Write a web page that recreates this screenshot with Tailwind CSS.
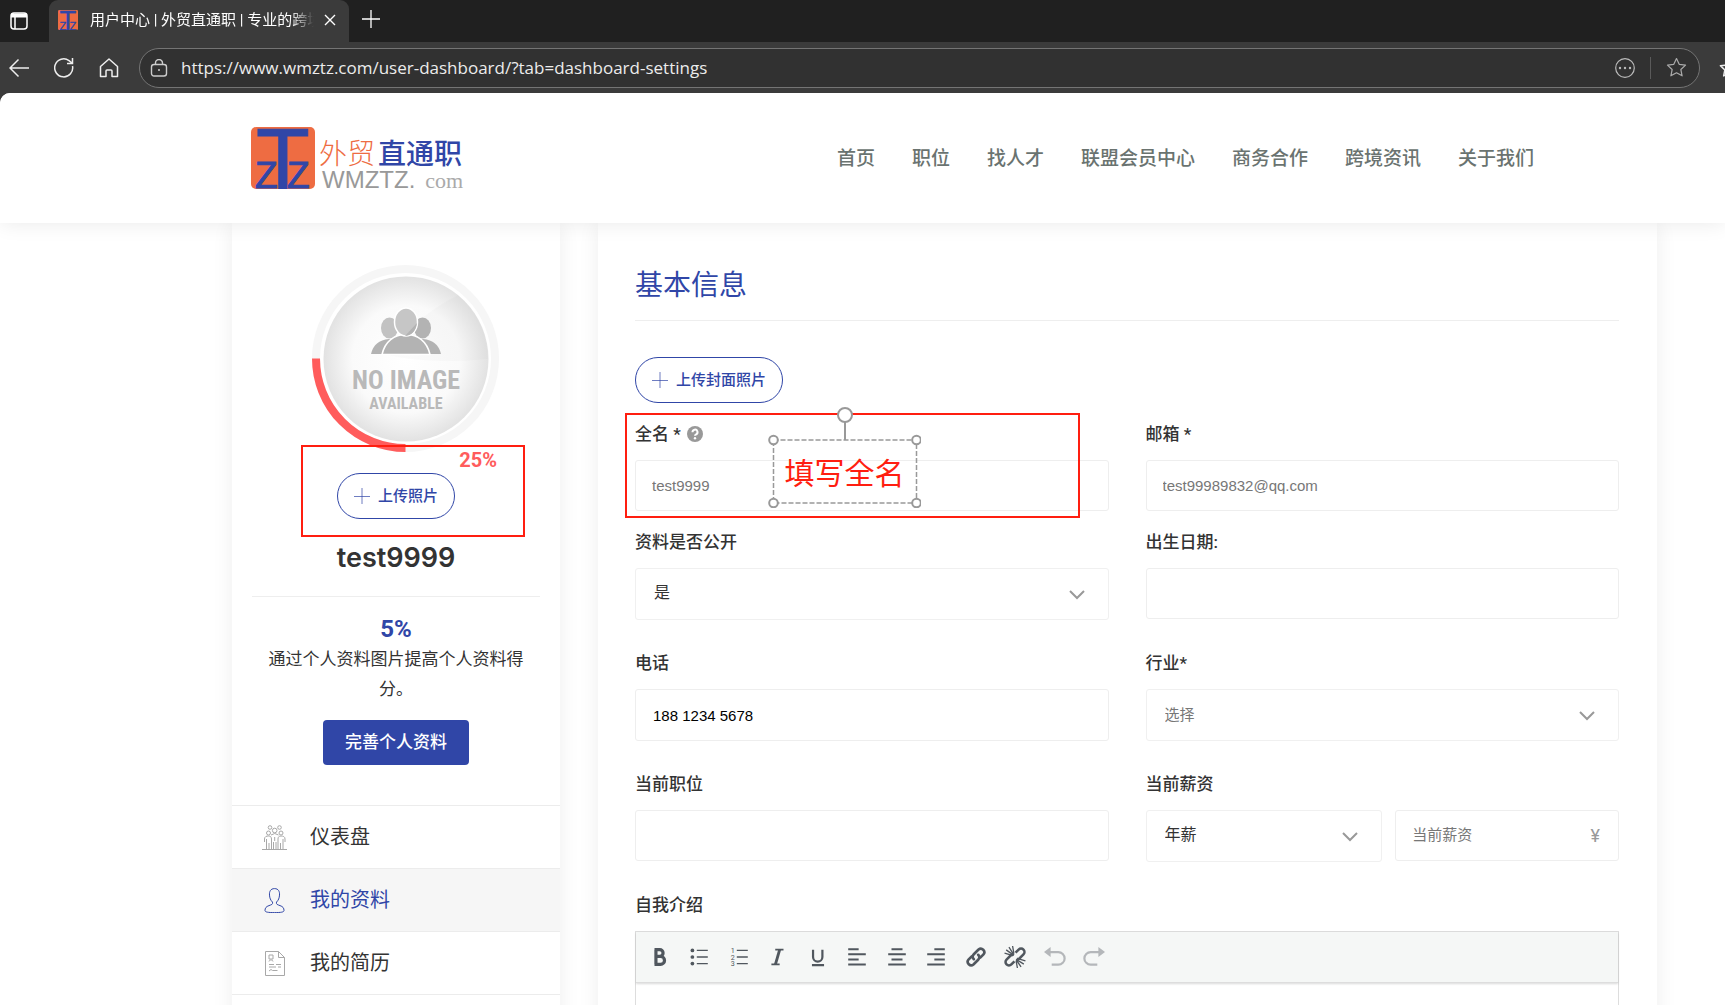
<!DOCTYPE html>
<html lang="zh-CN">
<head>
  <meta charset="UTF-8" />
  <meta name="viewport" content="width=device-width, initial-scale=1.0" />
  <title>用户中心 | 外贸直通职</title>
  <script src="https://cdn.jsdelivr.net/npm/@tailwindcss/browser@4"></script>
</head>
<body class="bg-[#3b3b3b] font-['Roboto','Noto_Sans_CJK_SC',sans-serif] text-[#333]">
  <div class="relative flex h-screen flex-col overflow-hidden">

    <!-- Tab strip -->
    <div class="flex h-[42px] shrink-0 items-end bg-[#202020] text-white">
      <button aria-label="标签页操作" class="flex h-[42px] w-[49px] items-center pl-[10px]">
        <svg class="size-[18px]" viewBox="0 0 18 18" fill="none" stroke="#fff" stroke-width="1.5"><rect x="1" y="1" width="16" height="16" rx="3" /><path d="M1 3.500h16" stroke-width="4" /><path d="M5 5v12" /></svg>
      </button>
      <div class="flex h-[42px] w-[300px] items-center rounded-t-[9px] bg-[#3b3b3b] pr-[13px] pb-[2px] pl-[9px]">
        <svg class="h-[20px] w-[20px] shrink-0" viewBox="0 0 64 62" preserveAspectRatio="none" font-family="Liberation Sans" fill="#3046a7" stroke="#3046a7"><rect width="64" height="62" rx="4" fill="#ee6c42" stroke="none" /><text x="5" y="62" font-size="88">T</text><text x="5" y="61" font-size="36">Z</text><text x="37" y="61" font-size="36">Z</text></svg>
        <span class="ml-[12px] flex-1 overflow-hidden text-[15px] leading-[24px] whitespace-nowrap [mask-image:linear-gradient(to_right,#000_200px,transparent_224px)]">用户中心 | 外贸直通职 | 专业的跨境</span>
        <button aria-label="关闭标签页" class="ml-[10px] shrink-0"><svg class="size-[12px]" viewBox="0 0 12 12" stroke="#fff" stroke-width="1.4"><path d="M1 1l10 10M11 1L1 11" /></svg></button>
      </div>
      <button aria-label="新建标签页" class="flex h-[42px] items-center pb-[4px] pl-[13px]"><svg class="size-[18px]" viewBox="0 0 18 18" stroke="#fff" stroke-width="1.3"><path d="M9 0v18M0 9h18" /></svg></button>
    </div>

    <!-- Address bar -->
    <div class="flex h-[51px] shrink-0 items-center overflow-hidden pl-[9px] text-[#eee]">
      <button aria-label="后退"><svg class="size-[20px]" viewBox="0 0 20 20" fill="none" stroke="#eee" stroke-width="1.5"><path d="M20 10H1M9.500 1.500L1 10l8.500 8.500" /></svg></button>
      <button aria-label="刷新" class="ml-[25px]"><svg class="size-[20px]" viewBox="0 0 20 20" fill="none" stroke="#eee" stroke-width="1.5"><path d="M18.500 8A9 9 0 1 1 15 2.600L18 5M18.500 0v5.500H13" /></svg></button>
      <button aria-label="主页" class="ml-[25px]"><svg class="size-[20px]" viewBox="0 0 20 20" fill="none" stroke="#eee" stroke-width="1.5" stroke-linejoin="round"><path d="M1.500 8.500L10 1l8.500 7.500V18.500h-5.500V13a1 1 0 0 0-1-1H8a1 1 0 0 0-1 1v5.500H1.500z" /></svg></button>
      <div class="ml-[20px] flex h-[40px] flex-1 items-center rounded-full border-[1px] border-[#747474] bg-[#313131] pr-[12px] pl-[10px]">
        <svg class="size-[18px] shrink-0" viewBox="0 0 18 18" fill="none" stroke="#ccc" stroke-width="1.4"><rect x="1.500" y="5.500" width="15" height="11.500" rx="2.500" /><path d="M5.500 5.500V4a3.500 3.500 0 0 1 7 0v1.500" /><circle cx="9" cy="11" r="1" fill="#ccc" stroke="none" /></svg>
        <input aria-label="地址" value="https://www.wmztz.com/user-dashboard/?tab=dashboard-settings" class="ml-[13px] min-w-0 flex-1 bg-transparent text-[17px] text-[#ececec] outline-none font-['Open_Sans','Noto_Sans',sans-serif]" />
        <button aria-label="更多"><svg class="size-[20px]" viewBox="0 0 20 20" fill="none" stroke="#bbb" stroke-width="1.2"><circle cx="10" cy="10" r="9.300" /><g fill="#bbb" stroke="none"><circle cx="5" cy="10" r="1.200" /><circle cx="10" cy="10" r="1.200" /><circle cx="15" cy="10" r="1.200" /></g></svg></button>
        <span class="mx-[15px] h-[22px] w-px bg-[#5a5a5a]"></span>
        <button aria-label="收藏"><svg class="size-[21px]" viewBox="0 0 24 24" fill="none" stroke="#aaa" stroke-width="1.4" stroke-linejoin="round"><path d="M12 1.800l3.100 6.600 7.200.9-5.300 5 1.400 7.200L12 18l-6.400 3.500L7 14.300l-5.300-5 7.200-.9z" /></svg></button>
      </div>
      <button aria-label="收藏夹" class="ml-[19px] w-[6px] overflow-hidden"><svg class="size-[20px] max-w-none" viewBox="0 0 24 24" fill="none" stroke="#eee" stroke-width="1.800" stroke-linejoin="round"><path d="M12 1.800l3.100 6.600 7.200.9-5.300 5 1.400 7.200L12 18l-6.400 3.500L7 14.300l-5.300-5 7.200-.9z" /></svg></button>
    </div>

    <!-- Page -->
    <div class="flex min-h-0 flex-1 flex-col overflow-hidden rounded-tl-[10px] bg-white">
      <header class="relative z-10 flex h-[130px] shrink-0 items-center justify-between bg-white pr-[191px] pl-[251px] shadow-[0_0_20px_rgba(0,0,0,0.09)]">
        <a href="#" class="flex items-start gap-[4px]">
          <svg class="h-[62px] w-[64px]" viewBox="0 0 64 62" font-family="Liberation Sans" fill="#3046a7" stroke="#3046a7"><rect width="64" height="62" rx="5" fill="#ee6c42" stroke="none" /><text x="5" y="62" font-size="88">T</text><text x="4" y="61" font-size="37">Z</text><text x="36" y="61" font-size="37">Z</text></svg>
          <span class="flex flex-col pt-[12px]">
            <span class="flex gap-[3px] text-[28px] leading-[32px] font-medium text-[#3046a7]"><span class="font-light text-[#ee6c42]">外贸</span>直通职</span>
            <span class="flex items-baseline pl-[3px] font-['Liberation_Sans',sans-serif] text-[24px] leading-[18px] text-[#999]">WMZTZ.<span class="ml-[10px] font-['Liberation_Serif',serif] text-[22px] text-[#aaa]">com</span></span>
          </span>
        </a>
        <nav class="flex gap-[37px] pt-[3px] text-[19px] font-medium text-[#6a7370]">
          <a href="#">首页</a>
          <a href="#">职位</a>
          <a href="#">找人才</a>
          <a href="#">联盟会员中心</a>
          <a href="#">商务合作</a>
          <a href="#">跨境资讯</a>
          <a href="#">关于我们</a>
        </nav>
      </header>

      <div class="flex flex-1 gap-[38px] pr-[68px] pl-[232px]">
        <!-- Sidebar -->
        <aside class="flex w-[328px] shrink-0 flex-col bg-white pt-[42px] shadow-[0_0_20px_rgba(0,0,0,0.07)]">
          <div class="flex flex-col items-center px-[20px]">
            <div class="relative ml-[19px]">
              <svg class="size-[187px]" viewBox="0 0 187 187">
                <defs>
                  <radialGradient id="disc"><stop offset="0" stop-color="#fff" /><stop offset="0.650" stop-color="#fafafa" /><stop offset="1" stop-color="#e2e2e2" /></radialGradient>
                </defs>
                <circle cx="93.500" cy="93.500" r="89.500" fill="none" stroke="#f6f6f6" stroke-width="8" />
                <path d="M4 93.500A89.500 89.500 0 0 0 93.500 183" fill="none" stroke="#ff5c5c" stroke-width="8" />
                <circle cx="94" cy="94" r="82.500" fill="url(#disc)" />
                <path d="M146 30Q105 50 75 90Q120 100 176 94Q175 55 146 30z" fill="#000" opacity="0.015" />
                <g fill="#b3b3b3">
                  <ellipse cx="77.500" cy="63" rx="8.500" ry="10.500" fill="#c2c2c2" /><ellipse cx="110.500" cy="63" rx="8.500" ry="10.500" />
                  <path d="M59 89c2-9 8-14 18-15h34c10 1 16 6 18 15z" />
                  <path d="M70 89.500c3-13 12-20 24-20s21 7 24 20z" stroke="#fff" stroke-width="1.500" />
                  <ellipse cx="94" cy="57" rx="11.500" ry="14" fill="#c6c6c6" stroke="#fff" stroke-width="1.500" />
                  <path d="M105 58c-1 8-6 13-12 13z" />
                </g>
                <g font-family="'Liberation Sans Narrow','Roboto Condensed','Roboto'" font-weight="700" fill="#b9b9b9" text-anchor="middle">
                  <text x="94" y="124" font-size="26">NO IMAGE</text>
                  <text x="94" y="144" font-size="16">AVAILABLE</text>
                </g>
              </svg>
              <span class="absolute top-full right-[2px] -mt-[4px] text-[20px] leading-[24px] font-bold text-[#ff5c5c]">25%</span>
            </div>
            <button class="mt-[21px] flex h-[46px] items-center gap-[8px] rounded-full border border-[#3046a7] px-[16px] text-[15px] font-medium text-[#3046a7]">
              <svg class="size-[16px]" viewBox="0 0 16 16" stroke="#3046a7" stroke-opacity="0.700"><path d="M8 0v16M0 8.500h16" /></svg>上传照片
            </button>
            <h2 class="mt-[23px] font-['Inter',sans-serif] text-[27px] leading-[32px] font-semibold">test9999</h2>
            <div class="mt-[22px] flex w-full flex-col items-center border-t border-[#eee] pt-[18px] text-center">
              <strong class="text-[24px] leading-[28px] font-bold text-[#3046a7]">5%</strong>
              <p class="px-[12px] pt-[1px] text-[17px] leading-[30px]">通过个人资料图片提高个人资料得分。</p>
              <button class="mt-[16px] mb-[40px] h-[45px] rounded-[4px] bg-[#3046a7] px-[22px] text-[17px] font-medium text-white">完善个人资料</button>
            </div>
          </div>
          <nav class="flex flex-col text-[20px]">
            <a href="#" class="flex h-[63px] items-center gap-[23px] border-t border-[#ececec] pl-[30px]">
              <svg class="size-[25px]" viewBox="0 0 25 25" fill="none" stroke="#a8a8a8"><circle cx="8" cy="2.500" r="1.800" /><circle cx="17.500" cy="2.500" r="1.800" /><circle cx="12.700" cy="5.500" r="2.300" /><circle cx="6.500" cy="8" r="2" /><circle cx="19" cy="8" r="2" /><path d="M0 24.500h25M2.500 17v-3c0-2.500 2-3 4-3s3 1 3 3v10M23 17v-3c0-2.500-2-3-4-3s-3 1-3 3v10M4.500 14v10M21 14v10M7 18v6M18.500 18v6M9 10q3.700-3 7.500 0M11.500 17v7M14 17v7M12.700 12v4" /></svg>
              仪表盘
            </a>
            <a href="#" class="flex h-[63px] items-center gap-[23px] border-t border-[#ececec] bg-[#f6f6f6] pl-[30px] text-[#3046a7]">
              <svg class="size-[25px]" viewBox="0 0 25 25" fill="none" stroke="#3046a7"><path d="M12.500.600c-4 0-5.300 3-5 6.500.2 3 1 5 3 7 .5 2.500-1 2.500-3.500 3.500-3 1-4 2.500-4 5 0 1.500 3 2 9.500 2s9.500-.5 9.500-2c0-2.500-1-4-4-5-2.500-1-4-1-3.500-3.500 2-2 2.800-4 3-7 .3-3.500-1-6.500-5-6.500z" /></svg>
              我的资料
            </a>
            <a href="#" class="flex h-[63px] items-center gap-[23px] border-t border-[#ececec] pl-[30px]">
              <svg class="size-[25px]" viewBox="0 0 25 25" fill="none" stroke="#a8a8a8"><path d="M3.500.500h13l6 6v18h-19zM16.500.500v6h6M7 4h4v4H7zM7 10.500c0-2 4-2 4 0M7 13.500h5M14 13.500h5M7 16h7M16 16h3M7 20l2-1.500 1.500 1h5" /></svg>
              我的简历
            </a>
            <a href="#" class="flex h-[63px] items-center border-t border-[#ececec] pl-[83px]" aria-label="更多"></a>
          </nav>
        </aside>

        <!-- Profile form -->
        <main class="min-w-0 flex-1 bg-white pt-[43px] pr-[38px] pl-[37px] shadow-[0_0_20px_rgba(0,0,0,0.07)]">
          <h1 class="border-b border-[#eee] pb-[14px] text-[28px] leading-[40px] text-[#3046a7]">基本信息</h1>
          <button class="mt-[36px] flex h-[46px] items-center gap-[8px] rounded-full border border-[#3046a7] px-[16px] text-[15px] font-medium text-[#3046a7]">
            <svg class="size-[16px]" viewBox="0 0 16 16" stroke="#3046a7" stroke-opacity="0.700"><path d="M8 0v16M0 8.500h16" /></svg>上传封面照片
          </button>

          <form>
            <div class="mt-[18px] grid grid-cols-2 gap-x-[37px]">
              <div class="flex flex-col gap-[13px]">
                <label for="fullname" class="flex items-center gap-[6px] text-[17px] leading-[26px] font-medium">全名 *
                  <svg class="size-[16px]" viewBox="0 0 16 16"><circle cx="8" cy="8" r="8" fill="#999" /><path d="M5.500 6.200a2.500 2.500 0 1 1 3.700 2.100C8.300 8.800 8 9 8 9.800" fill="none" stroke="#fff" stroke-width="2" /><circle cx="8" cy="12.300" r="1.200" fill="#fff" /></svg>
                </label>
                <input id="fullname" placeholder="test9999" class="h-[51px] w-full rounded-[3px] border border-[#eee] px-[16px] font-['Liberation_Sans',sans-serif] text-[15px] placeholder:text-[#777]" />
              </div>
              <div class="flex flex-col gap-[13px]">
                <label for="email" class="text-[17px] leading-[26px] font-medium">邮箱 *</label>
                <input id="email" placeholder="test99989832@qq.com" class="h-[51px] w-full rounded-[3px] border border-[#eee] px-[16px] font-['Liberation_Sans',sans-serif] text-[15px] placeholder:text-[#777]" />
              </div>
            </div>

            <div class="mt-[18px] grid grid-cols-2 gap-x-[37px] gap-y-[30px]">
              <div class="flex flex-col gap-[13px]">
                <label for="public" class="text-[17px] leading-[26px] font-medium">资料是否公开</label>
                <div class="relative">
                  <select id="public" class="h-[52px] w-full appearance-none rounded-[3px] border border-[#f0f0f0] bg-white px-[18px] pb-[3px] text-[16px]"><option>是</option><option>否</option></select>
                  <svg class="pointer-events-none absolute top-[22px] right-[24px] h-[10px] w-[16px]" viewBox="0 0 16 10" fill="none" stroke="#999" stroke-width="2"><path d="M1 1l7 7 7-7" /></svg>
                </div>
              </div>
              <div class="flex flex-col gap-[13px]">
                <label for="birth" class="text-[17px] leading-[26px] font-medium">出生日期:</label>
                <input id="birth" class="h-[51px] w-full rounded-[3px] border border-[#eee] px-[16px] text-[15px]" />
              </div>
              <div class="flex flex-col gap-[13px]">
                <label for="phone" class="text-[17px] leading-[26px] font-medium">电话</label>
                <input id="phone" value="188 1234 5678" class="h-[52px] w-full rounded-[3px] border border-[#eee] px-[17px] font-['Liberation_Sans',sans-serif] text-[15px] text-black" />
              </div>
              <div class="flex flex-col gap-[13px]">
                <label for="industry" class="text-[17px] leading-[26px] font-medium">行业*</label>
                <div class="relative">
                  <select id="industry" class="h-[52px] w-full appearance-none rounded-[3px] border border-[#f0f0f0] bg-white px-[18px] text-[15px] text-[#777]"><option>选择</option></select>
                  <svg class="pointer-events-none absolute top-[22px] right-[24px] h-[10px] w-[16px]" viewBox="0 0 16 10" fill="none" stroke="#999" stroke-width="2"><path d="M1 1l7 7 7-7" /></svg>
                </div>
              </div>
              <div class="flex flex-col gap-[13px]">
                <label for="position" class="text-[17px] leading-[26px] font-medium">当前职位</label>
                <input id="position" class="h-[51px] w-full rounded-[3px] border border-[#eee] px-[16px] text-[15px]" />
              </div>
              <div class="flex flex-col gap-[13px]">
                <label for="salary" class="text-[17px] leading-[26px] font-medium">当前薪资</label>
                <div class="flex gap-[13px]">
                  <div class="relative w-1/2">
                    <select aria-label="薪资类型" class="h-[52px] w-full appearance-none rounded-[3px] border border-[#f0f0f0] bg-white px-[18px] pb-[3px] text-[16px]"><option>年薪</option><option>月薪</option></select>
                    <svg class="pointer-events-none absolute top-[22px] right-[24px] h-[10px] w-[16px]" viewBox="0 0 16 10" fill="none" stroke="#999" stroke-width="2"><path d="M1 1l7 7 7-7" /></svg>
                  </div>
                  <div class="flex h-[51px] min-w-0 flex-1 items-center rounded-[3px] border border-[#eee] pr-[18px] pl-[16px]">
                    <input id="salary" placeholder="当前薪资" class="min-w-0 flex-1 text-[15px] outline-none placeholder:text-[#777]" />
                    <span class="text-[18px] text-[#999]">¥</span>
                  </div>
                </div>
              </div>
            </div>

            <div class="mt-[30px] flex flex-col gap-[13px]">
              <label for="intro" class="text-[17px] leading-[26px] font-medium">自我介绍</label>
              <div class="border border-[#ddd]">
                <div class="relative flex h-[51px] items-center border-b border-[#ddd] bg-[#f5f7f6] pl-[4px] text-[#50575e] shadow-[0_1px_2px_rgba(0,0,0,0.15)]">
                  <div class="flex w-[474px]">
                    <button type="button" aria-label="粗体" class="flex flex-1 justify-center"><svg class="size-[22px]" viewBox="0 0 20 20" fill="none" stroke="currentColor" stroke-width="2.900"><path d="M6.300 3.300v13.400M5 3.300h4.800a2.900 2.900 0 0 1 0 6H6M6 9.500h4.500a3.400 3.400 0 0 1 0 7.200H5" /></svg></button>
                    <button type="button" aria-label="项目列表" class="flex flex-1 justify-center"><svg class="size-[22px]" viewBox="0 0 20 20" fill="none" stroke="currentColor" stroke-width="1.300"><path d="M8 4h10M8 10h10M8 16h10" /><g fill="currentColor" stroke="none"><circle cx="4" cy="4" r="1.700" /><circle cx="4" cy="10" r="1.700" /><circle cx="4" cy="16" r="1.700" /></g></svg></button>
                    <button type="button" aria-label="编号列表" class="flex flex-1 justify-center"><svg class="size-[22px]" viewBox="0 0 20 20" fill="none" stroke="currentColor" stroke-width="1.300"><path d="M8 4h10M8 10h10M8 16h10" /><g fill="currentColor" stroke="none" font-family="Roboto" font-size="6.500"><text x="2.500" y="6">1</text><text x="2.500" y="12.300">2</text><text x="2.500" y="18.500">3</text></g></svg></button>
                    <button type="button" aria-label="斜体" class="flex flex-1 justify-center"><svg class="size-[22px]" viewBox="0 0 20 20" fill="none" stroke="currentColor" stroke-width="2"><path d="M7.500 3.300H15M4 16.700h7.500" stroke-width="1.500" /><path d="M11.600 3L7.600 17" stroke-width="2.600" /></svg></button>
                    <button type="button" aria-label="下划线" class="flex flex-1 justify-center"><svg class="size-[22px]" viewBox="0 0 20 20" fill="none" stroke="currentColor" stroke-width="2"><path d="M5.500 3.500v6.500a4 4 0 0 0 8.500 0V3.500M4.500 17.300h11" /></svg></button>
                    <button type="button" aria-label="左对齐" class="flex flex-1 justify-center"><svg class="size-[22px]" viewBox="0 0 20 20" stroke="currentColor" stroke-width="1.800"><path d="M2 3h9.500M2 7.600h16M2 12.200h9.500M2 16.800h16" /></svg></button>
                    <button type="button" aria-label="居中" class="flex flex-1 justify-center"><svg class="size-[22px]" viewBox="0 0 20 20" stroke="currentColor" stroke-width="1.800"><path d="M5 3h10M2 7.600h16M5 12.200h10M2 16.800h16" /></svg></button>
                    <button type="button" aria-label="右对齐" class="flex flex-1 justify-center"><svg class="size-[22px]" viewBox="0 0 20 20" stroke="currentColor" stroke-width="1.800"><path d="M8.500 3H18M2 7.600h16M8.500 12.200H18M2 16.800h16" /></svg></button>
                    <button type="button" aria-label="插入链接" class="flex flex-1 justify-center"><svg class="size-[22px]" viewBox="0 0 20 20" fill="none" stroke="currentColor" stroke-width="2.400" stroke-linecap="round"><path d="M8 12a3.200 3.200 0 0 1 0-4.500l4.300-4.300a3.200 3.200 0 0 1 4.500 4.500l-2.900 2.900M12 8a3.200 3.200 0 0 1 0 4.500l-4.300 4.300a3.200 3.200 0 0 1-4.500-4.500l2.900-2.900" /></svg></button>
                    <button type="button" aria-label="移除链接" class="flex flex-1 justify-center"><svg class="size-[22px]" viewBox="0 0 20 20" fill="none" stroke="currentColor" stroke-width="2.300"><path d="M10.500 6l2.800-2.800a3.100 3.100 0 0 1 4.400 4.400L14 11.300a2.800 2.800 0 0 1-2.500.5M9.500 14l-2.800 2.800a3.100 3.100 0 0 1-4.400-4.400L6 8.700a2.800 2.800 0 0 1 2.500-.5" /><path d="M9 8.500L2 3.500M9 8L4.500 1M9 7L7.800 0M7.500 8.500L0.500 6.500M11 12l7 4.500M11 12.500l4.500 6.500M11 13.500l1.200 6.500M12.500 11.500l7 2" stroke-width="1.200" /></svg></button>
                    <button type="button" aria-label="撤销" class="flex flex-1 justify-center"><svg class="size-[22px]" viewBox="0 0 20 20" fill="none" stroke="#b4b7ba" stroke-width="2"><path d="M5 5.500h8a5.500 5.500 0 0 1 0 11.500H7" /><path d="M0 5.500L6 1v9z" fill="#b4b7ba" stroke="none" /></svg></button>
                    <button type="button" aria-label="重做" class="flex flex-1 justify-center"><svg class="size-[22px]" viewBox="0 0 20 20" fill="none" stroke="#b4b7ba" stroke-width="2"><path d="M15 5.500H7a5.500 5.500 0 0 0 0 11.500H13" /><path d="M20 5.500L14 1v9z" fill="#b4b7ba" stroke="none" /></svg></button>
                  </div>
                </div>
                <textarea id="intro" class="block h-[180px] w-full resize-none outline-none"></textarea>
              </div>
            </div>
          </form>
        </main>
      </div>
    </div>

    <!-- Annotations drawn over the page -->
    <div class="pointer-events-none absolute top-[445px] left-[301px] z-20 h-[92px] w-[224px] border-2 border-[#ff1e10]"></div>
    <div class="pointer-events-none absolute top-[413px] left-[625px] z-20 h-[105px] w-[455px] border-2 border-[#ff1e10]"></div>
    <div class="pointer-events-none absolute top-[407px] left-[768px] z-20 flex h-[101px] w-[153px] items-end justify-center">
      <svg class="absolute inset-0 size-full" viewBox="0 0 153 101" fill="none" stroke="#999" stroke-width="2">
        <path d="M77 15v18" />
        <rect x="5.500" y="33" width="143" height="63" stroke-width="1.500" stroke-dasharray="5 2" />
        <g fill="#fff"><circle cx="77" cy="8" r="7" /><circle cx="5.500" cy="33" r="4.300" /><circle cx="148.500" cy="33" r="4.300" /><circle cx="5.500" cy="96" r="4.300" /><circle cx="148.500" cy="96" r="4.300" /></g>
      </svg>
      <span class="relative pb-[12px] text-[30px] leading-[44px] text-[#ff1e10]">填写全名</span>
    </div>
  </div>
</body>
</html>
